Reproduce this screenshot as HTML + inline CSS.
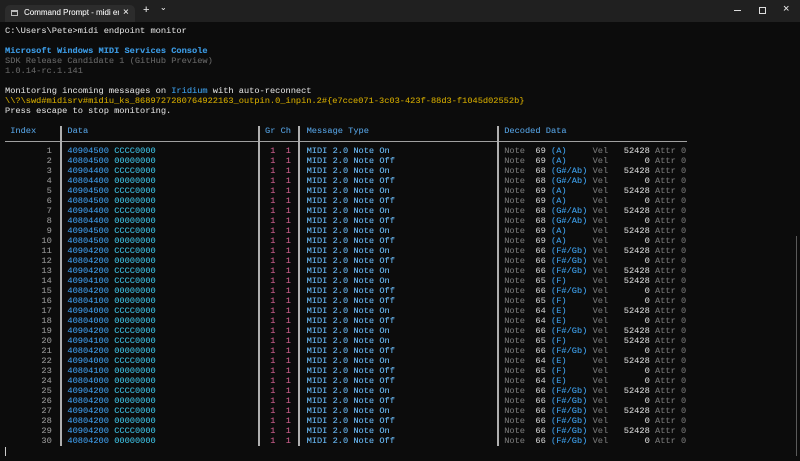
<!DOCTYPE html>
<html><head><meta charset="utf-8"><style>
*{margin:0;padding:0;box-sizing:border-box}
body{width:800px;height:461px;background:#0c0c0c;overflow:hidden;position:relative;font-family:"Liberation Mono",monospace;font-size:8.67px;color:#cccccc;text-shadow:0 0 0.3px currentColor}
#tb{position:absolute;left:0;top:0;width:800px;height:22px;background:#202020}
#tab{position:absolute;left:5px;top:5px;width:130px;height:17px;background:#2c2c2c;border-radius:5px 5px 0 0;font-family:"Liberation Sans",sans-serif;font-size:8px;color:#e8e8e8}
.ln{position:absolute;left:5px;height:10px;line-height:10px;white-space:pre}
.r{position:absolute;left:0;width:800px;height:10px;line-height:10px}
.r span{position:absolute;top:0;white-space:pre}
.r span:nth-child(1){left:5px;width:46.8px;text-align:right;color:#8a8a8a}
.r span:nth-child(2){left:67.4px;color:#3a8fd6}
.r span:nth-child(3){left:114.2px;color:#3ab0cf}
.r span:nth-child(4){left:270.2px;color:#c25a86}
.r span:nth-child(5){left:285.8px;color:#c25a86}
.r span:nth-child(6){left:306.6px;color:#63aee6}
.r span:nth-child(7){left:504.2px;color:#6e6e6e}
.r span:nth-child(8){left:535.4px;color:#b8b8b8}
.r span:nth-child(9){left:551px;color:#3a96dd}
.r span:nth-child(10){left:592.6px;color:#6e6e6e}
.r span:nth-child(11){left:608.2px;width:41.6px;text-align:right;color:#c8c8c8}
.r span:nth-child(12){left:655px;color:#6e6e6e}
.vb{position:absolute;top:126px;height:320px;width:1.5px;background:#b0b0b0}
.h{position:absolute;top:126px;height:10px;line-height:10px;color:#4f95d0}
</style></head><body>
<div id="tb">
 <div id="tab">
  <div style="position:absolute;left:6px;top:5px;width:7px;height:6px;border:1px solid #bbb;border-top-width:2px"></div>
  <div style="position:absolute;left:19px;top:3px;white-space:nowrap;width:95px;overflow:hidden">Command Prompt - midi endp</div>
  <div style="position:absolute;left:118px;top:2px;font-size:10px">×</div>
 </div>
 <div style="position:absolute;left:143px;top:4px;font-family:'Liberation Sans',sans-serif;font-size:11px;color:#ddd">+</div>
 <div style="position:absolute;left:160px;top:3px;font-family:'DejaVu Sans',sans-serif;font-size:8px;color:#ddd">⌄</div>
 <div style="position:absolute;left:734px;top:10px;width:7px;height:1px;background:#ddd"></div>
 <div style="position:absolute;left:759px;top:7px;width:7px;height:7px;border:1px solid #ddd"></div>
 <div style="position:absolute;left:783px;top:3px;font-family:'Liberation Sans',sans-serif;font-size:11px;color:#ddd">×</div>
</div>

<div class="ln" style="top:26px">C:\Users\Pete&gt;midi endpoint monitor</div>
<div class="ln" style="top:46px;color:#3a96dd;font-weight:bold">Microsoft Windows MIDI Services Console</div>
<div class="ln" style="top:56px;color:#5f5f5f">SDK Release Candidate 1 (GitHub Preview)</div>
<div class="ln" style="top:66px;color:#5f5f5f">1.0.14-rc.1.141</div>
<div class="ln" style="top:86px">Monitoring incoming messages on <span style="color:#3a96dd">Iridium</span> with auto-reconnect</div>
<div class="ln" style="top:96px;color:#c19c00">\\?\swd#midisrv#midiu_ks_8689727280764922163_outpin.0_inpin.2#{e7cce071-3c03-423f-88d3-f1045d02552b}</div>
<div class="ln" style="top:106px">Press escape to stop monitoring.</div>

<div class="h" style="left:10.2px">Index</div>
<div class="h" style="left:67.4px">Data</div>
<div class="h" style="left:265px">Gr</div>
<div class="h" style="left:280.6px">Ch</div>
<div class="h" style="left:306.6px">Message Type</div>
<div class="h" style="left:504.2px">Decoded Data</div>
<div style="position:absolute;left:5px;top:141px;width:682px;height:1px;background:#a0a0a0"></div>
<div class="vb" style="left:60px"></div>
<div class="vb" style="left:258px"></div>
<div class="vb" style="left:298px"></div>
<div class="vb" style="left:497px"></div>

<div class="r" style="top:146px"><span>1</span><span>40904500</span><span>CCCC0000</span><span>1</span><span>1</span><span>MIDI 2.0 Note On</span><span>Note</span><span>69</span><span>(A)</span><span>Vel</span><span>52428</span><span>Attr 0</span></div>
<div class="r" style="top:156px"><span>2</span><span>40804500</span><span>00000000</span><span>1</span><span>1</span><span>MIDI 2.0 Note Off</span><span>Note</span><span>69</span><span>(A)</span><span>Vel</span><span>0</span><span>Attr 0</span></div>
<div class="r" style="top:166px"><span>3</span><span>40904400</span><span>CCCC0000</span><span>1</span><span>1</span><span>MIDI 2.0 Note On</span><span>Note</span><span>68</span><span>(G#/Ab)</span><span>Vel</span><span>52428</span><span>Attr 0</span></div>
<div class="r" style="top:176px"><span>4</span><span>40804400</span><span>00000000</span><span>1</span><span>1</span><span>MIDI 2.0 Note Off</span><span>Note</span><span>68</span><span>(G#/Ab)</span><span>Vel</span><span>0</span><span>Attr 0</span></div>
<div class="r" style="top:186px"><span>5</span><span>40904500</span><span>CCCC0000</span><span>1</span><span>1</span><span>MIDI 2.0 Note On</span><span>Note</span><span>69</span><span>(A)</span><span>Vel</span><span>52428</span><span>Attr 0</span></div>
<div class="r" style="top:196px"><span>6</span><span>40804500</span><span>00000000</span><span>1</span><span>1</span><span>MIDI 2.0 Note Off</span><span>Note</span><span>69</span><span>(A)</span><span>Vel</span><span>0</span><span>Attr 0</span></div>
<div class="r" style="top:206px"><span>7</span><span>40904400</span><span>CCCC0000</span><span>1</span><span>1</span><span>MIDI 2.0 Note On</span><span>Note</span><span>68</span><span>(G#/Ab)</span><span>Vel</span><span>52428</span><span>Attr 0</span></div>
<div class="r" style="top:216px"><span>8</span><span>40804400</span><span>00000000</span><span>1</span><span>1</span><span>MIDI 2.0 Note Off</span><span>Note</span><span>68</span><span>(G#/Ab)</span><span>Vel</span><span>0</span><span>Attr 0</span></div>
<div class="r" style="top:226px"><span>9</span><span>40904500</span><span>CCCC0000</span><span>1</span><span>1</span><span>MIDI 2.0 Note On</span><span>Note</span><span>69</span><span>(A)</span><span>Vel</span><span>52428</span><span>Attr 0</span></div>
<div class="r" style="top:236px"><span>10</span><span>40804500</span><span>00000000</span><span>1</span><span>1</span><span>MIDI 2.0 Note Off</span><span>Note</span><span>69</span><span>(A)</span><span>Vel</span><span>0</span><span>Attr 0</span></div>
<div class="r" style="top:246px"><span>11</span><span>40904200</span><span>CCCC0000</span><span>1</span><span>1</span><span>MIDI 2.0 Note On</span><span>Note</span><span>66</span><span>(F#/Gb)</span><span>Vel</span><span>52428</span><span>Attr 0</span></div>
<div class="r" style="top:256px"><span>12</span><span>40804200</span><span>00000000</span><span>1</span><span>1</span><span>MIDI 2.0 Note Off</span><span>Note</span><span>66</span><span>(F#/Gb)</span><span>Vel</span><span>0</span><span>Attr 0</span></div>
<div class="r" style="top:266px"><span>13</span><span>40904200</span><span>CCCC0000</span><span>1</span><span>1</span><span>MIDI 2.0 Note On</span><span>Note</span><span>66</span><span>(F#/Gb)</span><span>Vel</span><span>52428</span><span>Attr 0</span></div>
<div class="r" style="top:276px"><span>14</span><span>40904100</span><span>CCCC0000</span><span>1</span><span>1</span><span>MIDI 2.0 Note On</span><span>Note</span><span>65</span><span>(F)</span><span>Vel</span><span>52428</span><span>Attr 0</span></div>
<div class="r" style="top:286px"><span>15</span><span>40804200</span><span>00000000</span><span>1</span><span>1</span><span>MIDI 2.0 Note Off</span><span>Note</span><span>66</span><span>(F#/Gb)</span><span>Vel</span><span>0</span><span>Attr 0</span></div>
<div class="r" style="top:296px"><span>16</span><span>40804100</span><span>00000000</span><span>1</span><span>1</span><span>MIDI 2.0 Note Off</span><span>Note</span><span>65</span><span>(F)</span><span>Vel</span><span>0</span><span>Attr 0</span></div>
<div class="r" style="top:306px"><span>17</span><span>40904000</span><span>CCCC0000</span><span>1</span><span>1</span><span>MIDI 2.0 Note On</span><span>Note</span><span>64</span><span>(E)</span><span>Vel</span><span>52428</span><span>Attr 0</span></div>
<div class="r" style="top:316px"><span>18</span><span>40804000</span><span>00000000</span><span>1</span><span>1</span><span>MIDI 2.0 Note Off</span><span>Note</span><span>64</span><span>(E)</span><span>Vel</span><span>0</span><span>Attr 0</span></div>
<div class="r" style="top:326px"><span>19</span><span>40904200</span><span>CCCC0000</span><span>1</span><span>1</span><span>MIDI 2.0 Note On</span><span>Note</span><span>66</span><span>(F#/Gb)</span><span>Vel</span><span>52428</span><span>Attr 0</span></div>
<div class="r" style="top:336px"><span>20</span><span>40904100</span><span>CCCC0000</span><span>1</span><span>1</span><span>MIDI 2.0 Note On</span><span>Note</span><span>65</span><span>(F)</span><span>Vel</span><span>52428</span><span>Attr 0</span></div>
<div class="r" style="top:346px"><span>21</span><span>40804200</span><span>00000000</span><span>1</span><span>1</span><span>MIDI 2.0 Note Off</span><span>Note</span><span>66</span><span>(F#/Gb)</span><span>Vel</span><span>0</span><span>Attr 0</span></div>
<div class="r" style="top:356px"><span>22</span><span>40904000</span><span>CCCC0000</span><span>1</span><span>1</span><span>MIDI 2.0 Note On</span><span>Note</span><span>64</span><span>(E)</span><span>Vel</span><span>52428</span><span>Attr 0</span></div>
<div class="r" style="top:366px"><span>23</span><span>40804100</span><span>00000000</span><span>1</span><span>1</span><span>MIDI 2.0 Note Off</span><span>Note</span><span>65</span><span>(F)</span><span>Vel</span><span>0</span><span>Attr 0</span></div>
<div class="r" style="top:376px"><span>24</span><span>40804000</span><span>00000000</span><span>1</span><span>1</span><span>MIDI 2.0 Note Off</span><span>Note</span><span>64</span><span>(E)</span><span>Vel</span><span>0</span><span>Attr 0</span></div>
<div class="r" style="top:386px"><span>25</span><span>40904200</span><span>CCCC0000</span><span>1</span><span>1</span><span>MIDI 2.0 Note On</span><span>Note</span><span>66</span><span>(F#/Gb)</span><span>Vel</span><span>52428</span><span>Attr 0</span></div>
<div class="r" style="top:396px"><span>26</span><span>40804200</span><span>00000000</span><span>1</span><span>1</span><span>MIDI 2.0 Note Off</span><span>Note</span><span>66</span><span>(F#/Gb)</span><span>Vel</span><span>0</span><span>Attr 0</span></div>
<div class="r" style="top:406px"><span>27</span><span>40904200</span><span>CCCC0000</span><span>1</span><span>1</span><span>MIDI 2.0 Note On</span><span>Note</span><span>66</span><span>(F#/Gb)</span><span>Vel</span><span>52428</span><span>Attr 0</span></div>
<div class="r" style="top:416px"><span>28</span><span>40804200</span><span>00000000</span><span>1</span><span>1</span><span>MIDI 2.0 Note Off</span><span>Note</span><span>66</span><span>(F#/Gb)</span><span>Vel</span><span>0</span><span>Attr 0</span></div>
<div class="r" style="top:426px"><span>29</span><span>40904200</span><span>CCCC0000</span><span>1</span><span>1</span><span>MIDI 2.0 Note On</span><span>Note</span><span>66</span><span>(F#/Gb)</span><span>Vel</span><span>52428</span><span>Attr 0</span></div>
<div class="r" style="top:436px"><span>30</span><span>40804200</span><span>00000000</span><span>1</span><span>1</span><span>MIDI 2.0 Note Off</span><span>Note</span><span>66</span><span>(F#/Gb)</span><span>Vel</span><span>0</span><span>Attr 0</span></div>

<div style="position:absolute;left:5px;top:447px;width:1px;height:9px;background:#cccccc"></div>
<div style="position:absolute;left:796px;top:236px;width:1px;height:220px;background:#5a5a5a"></div>
</body></html>
